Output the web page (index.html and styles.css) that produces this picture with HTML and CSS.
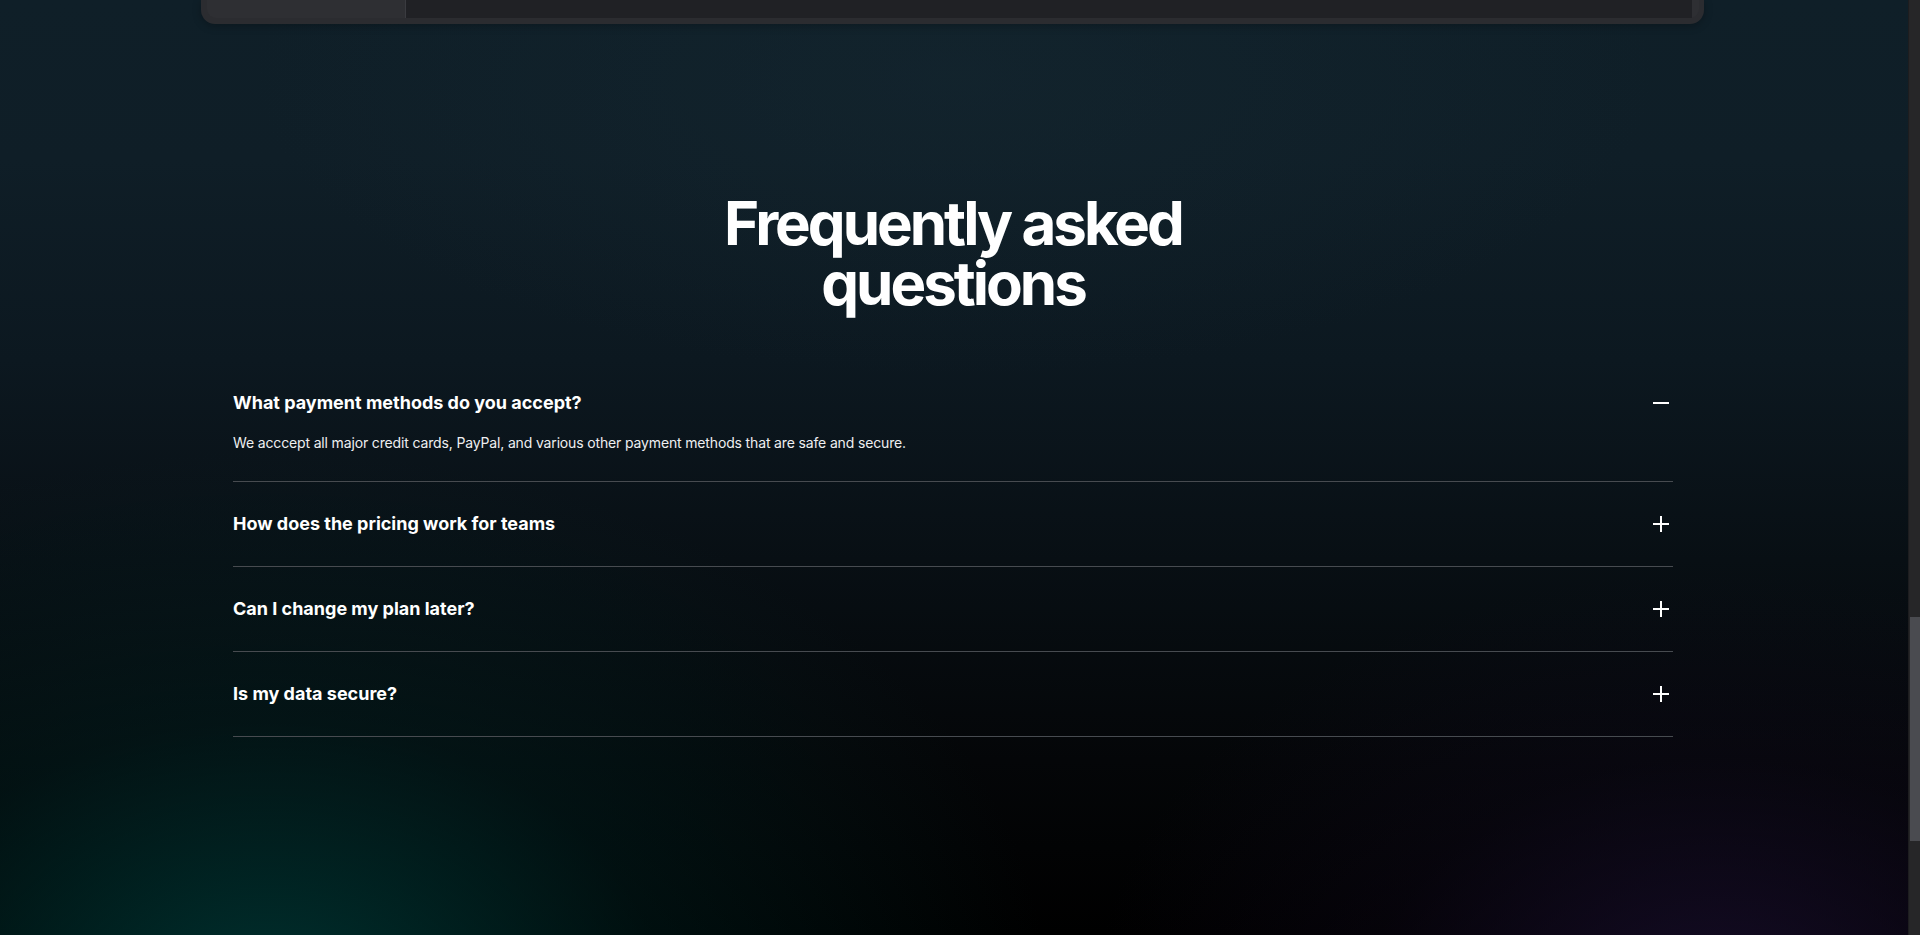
FILE: index.html
```html
<!DOCTYPE html>
<html lang="en">
<head>
<meta charset="utf-8">
<title>FAQ</title>
<link rel="stylesheet" href="styles.css">
</head>
<body>
<div class="viewport">
  <main class="page">
    <div class="preview">
      <div class="preview-inner">
        <div class="preview-side"></div>
        <div class="preview-main"></div>
      </div>
    </div>

    <section class="faq">
      <h2 class="faq-title">Frequently asked<br>questions</h2>
      <div class="faq-list">
        <div class="faq-item open">
          <div class="faq-q">
            <span>What payment methods do you accept?</span>
            <svg class="faq-icon" viewBox="0 0 24 24" width="24" height="24"><path d="M4 12h16"/></svg>
          </div>
          <p class="faq-a">We acccept all major credit cards, PayPal, and various other payment methods that are safe and secure.</p>
        </div>
        <div class="faq-item">
          <div class="faq-q">
            <span>How does the pricing work for teams</span>
            <svg class="faq-icon" viewBox="0 0 24 24" width="24" height="24"><path d="M4 12h16M12 4v16"/></svg>
          </div>
        </div>
        <div class="faq-item">
          <div class="faq-q">
            <span>Can I change my plan later?</span>
            <svg class="faq-icon" viewBox="0 0 24 24" width="24" height="24"><path d="M4 12h16M12 4v16"/></svg>
          </div>
        </div>
        <div class="faq-item">
          <div class="faq-q">
            <span>Is my data secure?</span>
            <svg class="faq-icon" viewBox="0 0 24 24" width="24" height="24"><path d="M4 12h16M12 4v16"/></svg>
          </div>
        </div>
      </div>
    </section>
  </main>
  <div class="scrollbar"><div class="scrollbar-thumb"></div></div>
</div>
</body>
</html>
```

FILE: styles.css
```css
* { box-sizing: border-box; }
html, body { margin: 0; padding: 0; }
body {
  font-family: Inter, "Noto Sans", "Liberation Sans", sans-serif;
  color: #fff;
  background: #000;
}
.viewport {
  display: flex;
  height: 935px;
  overflow: hidden;
}
.page {
  flex: 1;
  height: 935px;
  overflow: hidden;
  background:
    radial-gradient(ellipse 780px 540px at 14% 106%, rgba(0, 54, 52, 0.9), rgba(0, 42, 42, 0.35) 50%, rgba(0, 0, 0, 0) 100%),
    radial-gradient(ellipse 620px 420px at 90% 106%, rgba(24, 14, 44, 0.85), rgba(18, 10, 32, 0.3) 55%, rgba(0, 0, 0, 0) 100%),
    radial-gradient(ellipse 700px 300px at 50% 8%, rgba(24, 44, 54, 0.35), rgba(0, 0, 0, 0) 100%),
    linear-gradient(180deg, #0f1f28 0px, #0f1e27 160px, #0c1820 360px, #080f14 560px, #040608 760px, #000 935px);
}

/* preview card cut off at top */
.preview {
  margin: 0 204px 0 201px;
  height: 24px;
  padding: 0 5px 6px 6px;
  background: #2b2c30;
  border-radius: 0 0 14px 14px;
  box-shadow: 0 2px 8px rgba(0, 0, 0, 0.25);
}
.preview-inner {
  display: flex;
  height: 18px;
  background: #2e2f33;
  border-radius: 0 0 9px 9px;
  padding-right: 7px;
}
.preview-side {
  width: 198px;
  flex: none;
}
.preview-main {
  flex: 1;
  background: #202125;
  border-left: 1px solid #3a3b40;
}

/* FAQ */
.faq {
  margin: 0 235px 0 233px;
  padding-top: 169px;
}
.faq-title {
  margin: 0 0 48px;
  text-align: center;
  font-size: 60px;
  line-height: 60px;
  font-weight: 700;
  letter-spacing: -0.05em;
  color: #fff;
}
.faq-list {
  display: flex;
  flex-direction: column;
}
.faq-item {
  border-bottom: 1px solid #474b50;
  padding: 28px 0;
}
.faq-q {
  display: flex;
  align-items: center;
  justify-content: space-between;
  font-size: 18px;
  line-height: 28px;
  font-weight: 650;
}
.faq-icon {
  width: 24px;
  height: 24px;
  fill: none;
  stroke: #fff;
  stroke-width: 2;
  stroke-linecap: butt;
}
.faq-a {
  margin: 16px 0 0;
  font-size: 14px;
  line-height: 20px;
  letter-spacing: -0.15px;
  color: #eeeff1;
}

/* fake browser scrollbar */
.scrollbar {
  width: 12px;
  flex: none;
  background: #262628;
  border-left: 1px solid #1d1d1f;
  padding: 617px 0 0 1px;
}
.scrollbar-thumb {
  height: 224px;
  background: #4a4b50;
}
```
